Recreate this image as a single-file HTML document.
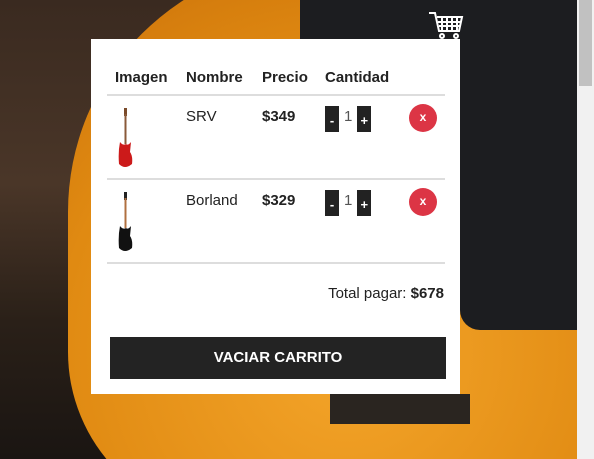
<!DOCTYPE html>
<html style="overflow:hidden"><head><meta charset="utf-8"><style>
*{margin:0;padding:0;box-sizing:border-box}
html,body{width:594px;height:459px;overflow:hidden}
body{position:relative;font-family:"Liberation Sans",sans-serif;background:#2a1d16}
.bg{position:absolute;left:0;top:0;width:577px;height:459px;overflow:hidden;background:linear-gradient(180deg,#3a2a20 0%,#4a3628 40%,#2a2018 70%,#1a1512 100%)}
.orange{position:absolute;left:68px;top:-40px;width:560px;height:560px;border-radius:45% 0 0 30%;background:radial-gradient(circle at 50% 70%,#f4a52a,#e08a12 60%,#c86e08)}
.guard{position:absolute;left:300px;top:0;width:277px;height:260px;background:#1c1d20}
.guard2{position:absolute;left:460px;top:250px;width:117px;height:80px;background:#1c1d20;border-radius:0 0 0 20px}
.bridge{position:absolute;left:330px;top:394px;width:140px;height:30px;background:#2a2520}
.sb{position:absolute;right:0;top:0;width:17px;height:459px;background:#f1f1f1}
.sb i{position:absolute;left:2px;top:0;width:13px;height:86px;background:#c1c1c1}
.panel{position:absolute;left:91px;top:39px;width:369px;height:355px;background:#fff}
table{position:absolute;left:16px;top:22px;width:338px;border-collapse:collapse;color:#222}
th{font-size:15px;font-weight:bold;text-align:left;height:34px;vertical-align:middle;border-bottom:2px solid #ddd;padding-left:8px}
td{height:84px;vertical-align:top;padding-top:12px;padding-left:8px;font-size:15px;border-bottom:2px solid #ddd}
.q{display:inline-block;width:14px;height:26px;background:#222;color:#fff;font-weight:bold;font-size:13px;text-align:center;line-height:30px;vertical-align:top;margin-top:-2px}
.n{display:inline-block;width:10px;text-align:center;color:#555;font-size:15px}
.x{display:inline-block;width:28px;height:28px;border-radius:50%;background:#dc3545;color:#fff;font-weight:bold;font-size:12px;text-align:center;line-height:27px;margin-top:-4px}
.total{position:absolute;right:16px;top:246px;font-size:15px;color:#222}
.btn{position:absolute;left:19px;top:298px;width:336px;height:42px;background:#232323;color:#fff;font-weight:bold;font-size:15px;text-align:center;line-height:42px}
</style></head><body>
<div class="bg"><div class="orange"></div><div class="guard"></div><div class="guard2"></div><div class="bridge"></div>
<svg style="position:absolute;left:428px;top:10px" width="36" height="30" viewBox="0 0 36 30" fill="none" stroke="#fff" stroke-width="2"><path d="M1 3h6l4 18h20l3-14H9"/><path d="M14 8v12M19 8v12M24 8v12M29 8v12M10 12h23M11 16h21"/><circle cx="14" cy="26" r="2"/><circle cx="28" cy="26" r="2"/></svg>
</div>
<div class="sb"><i></i></div>
<div class="panel">
<table>
<tr><th style="width:71px;padding-left:8px">Imagen</th><th style="width:76px">Nombre</th><th style="width:63px">Precio</th><th style="width:84px">Cantidad</th><th></th></tr>
<tr><td><svg width="20" height="62" viewBox="0 0 20 62"><rect x="9" y="0" width="3" height="8" fill="#7a4a2a"/><rect x="9.5" y="6" width="2" height="30" fill="#8a5a3a"/><path d="M5 34 Q3 44 4 56 Q10 62 17 56 Q18 48 15 44 L16 34 Q13 38 11 36 Q8 38 5 34Z" fill="#cc1a1a"/></svg></td><td>SRV</td><td><b>$349</b></td><td><span class="q">-</span> <span class="n">1</span> <span class="q">+</span></td><td style="text-align:right;padding-right:8px"><span class="x">x</span></td></tr>
<tr><td><svg width="20" height="62" viewBox="0 0 20 62"><rect x="9" y="0" width="3" height="8" fill="#222"/><rect x="9.5" y="6" width="2" height="30" fill="#b07040"/><path d="M5 34 Q3 44 4 56 Q10 62 17 56 Q18 48 15 44 L16 34 Q13 38 11 36 Q8 38 5 34Z" fill="#111"/></svg></td><td>Borland</td><td><b>$329</b></td><td><span class="q">-</span> <span class="n">1</span> <span class="q">+</span></td><td style="text-align:right;padding-right:8px"><span class="x">x</span></td></tr>
</table>
<div class="total">Total pagar: <b>$678</b></div>
<div class="btn">VACIAR CARRITO</div>
</div>
</body></html>
